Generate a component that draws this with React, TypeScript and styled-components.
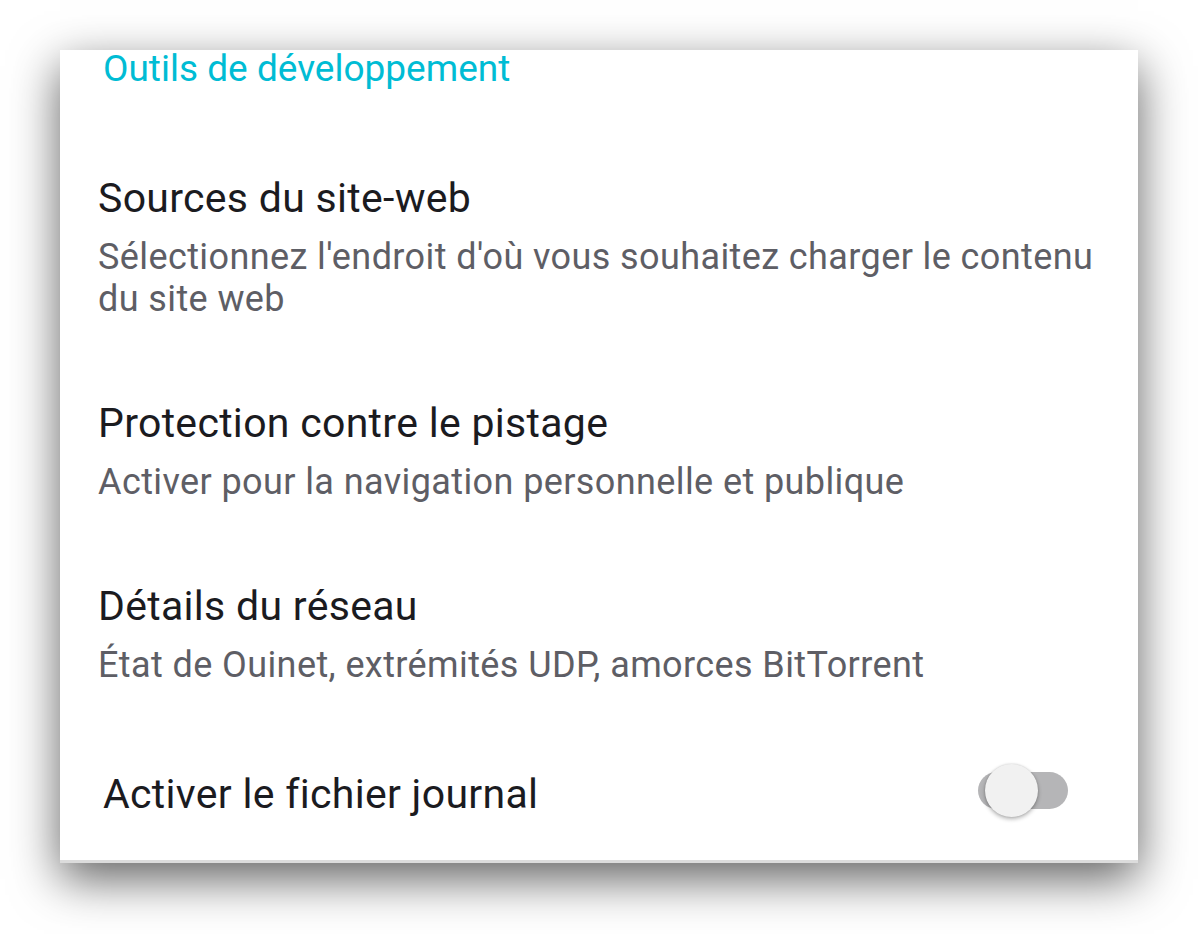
import styled, { createGlobalStyle } from "styled-components";

const GlobalStyle = createGlobalStyle`
  html, body {
    margin: 0;
    padding: 0;
    background: #ffffff;
  }
  body {
    font-family: Roboto, "Noto Sans", sans-serif;
  }
`;

const Page = styled.div`
  width: 1198px;
  height: 934px;
  padding: 50px 60px 0 60px;
  box-sizing: border-box;
  overflow: hidden;
`;

const Card = styled.div`
  background: #ffffff;
  height: 813px;
  box-sizing: border-box;
  border-bottom: 3px solid #dcdcdc;
  box-shadow: 0 16px 45px rgba(0, 0, 0, 0.62);
  display: flex;
  flex-direction: column;
`;

const SectionTitle = styled.div`
  color: #00bcd4;
  font-size: 37px;
  line-height: 44px;
  padding-left: 43px;
  margin-top: -3px;
`;

const List = styled.div`
  display: flex;
  flex-direction: column;
  padding-top: 45px;
  flex: 1;
`;

const Item = styled.div<{ $switch?: boolean }>`
  display: flex;
  align-items: center;
  justify-content: space-between;
  padding: ${(p) => (p.$switch ? "0 70px 0 43px" : "38px 36px 41px 38px")};
  flex: ${(p) => (p.$switch ? 1 : "none")};
`;

const Texts = styled.div`
  display: flex;
  flex-direction: column;
  gap: 14px;
`;

const Title = styled.div`
  color: #1b1b1f;
  font-size: 41px;
  line-height: 48px;
  letter-spacing: 0.3px;
`;

const Summary = styled.div`
  color: #5e5e65;
  font-size: 36px;
  line-height: 42px;
  letter-spacing: 0.4px;
`;

const Track = styled.div`
  position: relative;
  width: 90px;
  height: 37px;
  margin-bottom: 6px;
  border-radius: 19px;
  background: #b5b5b7;
`;

const Thumb = styled.div`
  position: absolute;
  left: 7px;
  top: -8px;
  width: 53px;
  height: 53px;
  border-radius: 50%;
  background: #f1f1f1;
  box-shadow: 0 2px 4px rgba(0, 0, 0, 0.3), 0 0 2px rgba(0, 0, 0, 0.15);
`;

const items = [
  {
    title: "Sources du site-web",
    summary: "Sélectionnez l'endroit d'où vous souhaitez charger le contenu du site web",
  },
  {
    title: "Protection contre le pistage",
    summary: "Activer pour la navigation personnelle et publique",
  },
  {
    title: "Détails du réseau",
    summary: "État de Ouinet, extrémités UDP, amorces BitTorrent",
  },
];

export default function App() {
  return (
    <>
      <GlobalStyle />
      <Page>
        <Card>
          <SectionTitle>Outils de développement</SectionTitle>
          <List>
            {items.map((it) => (
              <Item key={it.title}>
                <Texts>
                  <Title>{it.title}</Title>
                  <Summary>{it.summary}</Summary>
                </Texts>
              </Item>
            ))}
            <Item $switch>
              <Title>Activer le fichier journal</Title>
              <Track>
                <Thumb />
              </Track>
            </Item>
          </List>
        </Card>
      </Page>
    </>
  );
}
